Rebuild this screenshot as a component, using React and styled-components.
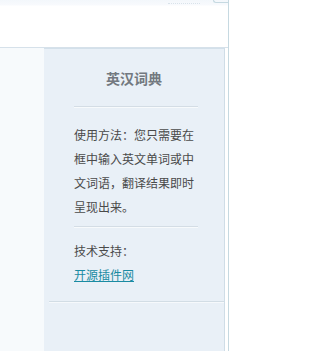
import React from "react";
import styled, { createGlobalStyle } from "styled-components";

const GlobalStyle = createGlobalStyle`
  html, body {
    margin: 0;
    padding: 0;
    background: #ffffff;
  }
  body {
    font-family: "Noto Sans CJK SC", "Noto Sans", sans-serif;
    font-size: 12px;
    color: #4a4a4a;
  }
`;

const Page = styled.div`
  width: 228px;
  height: 351px;
  border-right: 1px solid #c6d9e1;
  display: flex;
  flex-direction: column;
  overflow: hidden;
`;

const TopBar = styled.div`
  height: 47px;
  border-bottom: 1px solid #d6e1ea;
  background: linear-gradient(#f3f7fb 0, #f8fafd 5px, #ffffff 6px);
  display: flex;
  justify-content: flex-end;
  align-items: flex-start;
  gap: 13px;
`;

const FaintText = styled.span`
  display: block;
  width: 32px;
  height: 3px;
  border-bottom: 1px dotted #d9e3ea;
`;

const CornerTab = styled.span`
  display: block;
  width: 14px;
  height: 2px;
  border: 1px solid #c6d9e1;
  border-top: none;
  border-right: none;
  border-bottom-left-radius: 3px;
`;

const Body = styled.div`
  flex: 1;
  display: flex;
`;

const LeftColumn = styled.div`
  width: 44px;
  background: #f7fafc;
`;

const Sidebar = styled.aside`
  width: 180px;
  background: #e9f0f7;
  border-top: 1px solid #d3e0ea;
  border-right: 1px solid #cfdde7;
  display: flex;
  flex-direction: column;
`;

const Title = styled.h3`
  margin: 0 0 18px;
  padding-top: 19px;
  line-height: 20px;
  font-size: 14px;
  font-weight: bold;
  color: #737980;
  text-align: center;
`;

const Block = styled.div`
  margin: 0 26px 0 30px;
  padding: ${(p) => p.$pad || "0"};
  border-top: 1px solid #d4dde5;
  box-shadow: inset 0 1px 0 #f7fafc;
  line-height: 24px;
`;

const Link = styled.a`
  color: #1a8ba2;
  text-decoration: underline;
`;

const BottomRule = styled.div`
  margin: ${(p) => p.$top} 0 0 5px;
  border-top: 1px solid #d2dde5;
  box-shadow: inset 0 1px 0 #f6f9fc;
  height: 1px;
`;

export default function App() {
  return (
    <>
      <GlobalStyle />
      <Page>
        <TopBar>
          <FaintText />
          <CornerTab />
        </TopBar>
        <Body>
          <LeftColumn />
          <Sidebar>
            <Title>英汉词典</Title>
            <Block $pad="16px 0 7px">
              使用方法：您只需要在框中输入英文单词或中文词语，翻译结果即时呈现出来。
            </Block>
            <Block $pad="12px 0 0">
              <div>技术支持：</div>
              <Link href="#">开源插件网</Link>
            </Block>
            <BottomRule $top="14px" />
          </Sidebar>
        </Body>
      </Page>
    </>
  );
}
